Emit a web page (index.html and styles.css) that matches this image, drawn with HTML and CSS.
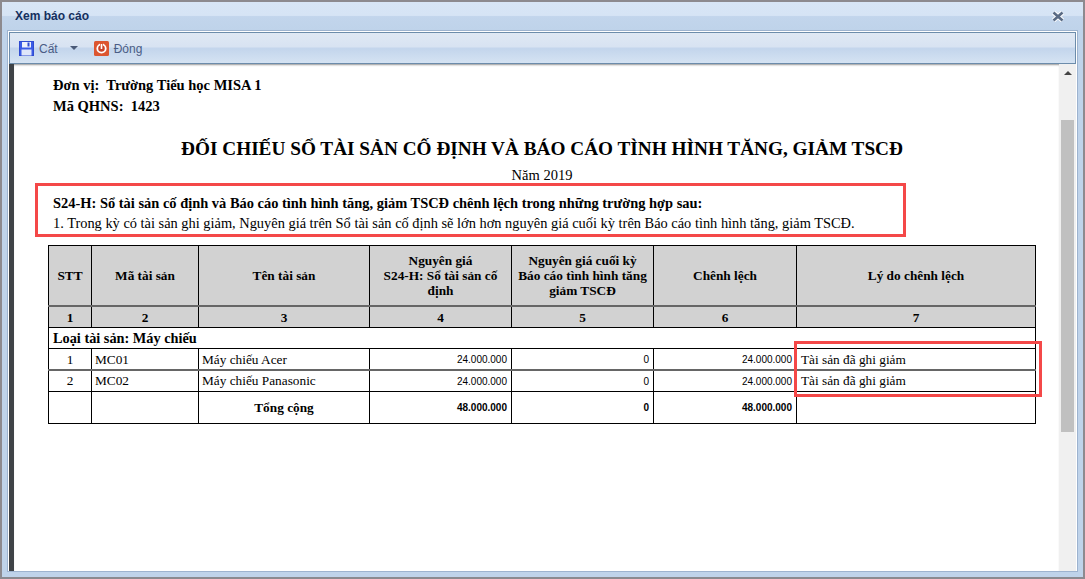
FILE: index.html
```html
<!DOCTYPE html>
<html lang="vi">
<head>
    <meta charset="UTF-8">
    <title>Xem báo cáo</title>
    <link rel="stylesheet" href="styles.css">
</head>
<body>
    <div class="window">
        <!-- Title bar -->
        <div class="titlebar">
            <div class="title">Xem báo cáo</div>
            <svg class="close" width="12" height="11" viewBox="0 0 12 11">
                <path d="M1.5 1.5 L10.5 9.5 M10.5 1.5 L1.5 9.5" stroke="#fff" stroke-width="4.5" fill="none"/>
                <path d="M1.5 1.5 L10.5 9.5 M10.5 1.5 L1.5 9.5" stroke="#5a6b85" stroke-width="2.6" fill="none"/>
            </svg>
        </div>

        <div class="frame">
            <!-- Toolbar -->
            <div class="toolbar">
                <div class="tool">
                    <svg width="15" height="15" viewBox="0 0 15 15">
                        <rect x="0.5" y="0.5" width="14" height="14" fill="#3a5be6" stroke="#2f4bd0"/>
                        <rect x="3" y="1" width="9" height="5.5" fill="#eef1fb"/>
                        <rect x="8.5" y="1.5" width="2" height="4" fill="#2f4bd0"/>
                        <rect x="2.5" y="8.5" width="10" height="6" fill="#dfe6fa"/>
                    </svg>
                    <span class="tool-label">Cất</span>
                    <span class="caret"></span>
                </div>
                <div class="tool">
                    <svg width="15" height="15" viewBox="0 0 15 15">
                        <rect x="0" y="0" width="15" height="15" rx="1.5" fill="#dc5530"/>
                        <circle cx="7.5" cy="7.5" r="4.2" fill="#c9432a" stroke="#fff" stroke-width="1.8"/>
                        <rect x="6" y="2" width="3" height="4" fill="#dc5530"/>
                        <rect x="6.7" y="3" width="1.6" height="5" fill="#fff"/>
                    </svg>
                    <span class="tool-label">Đóng</span>
                </div>
            </div>

            <div class="body">
                <div class="left-bar"></div>

                <!-- Report -->
                <div class="report">
                    <div class="unit">Đơn vị:&nbsp; Trường Tiểu học MISA 1</div>
                    <div class="unit">Mã QHNS:&nbsp; 1423</div>
                    <h1>ĐỐI CHIẾU SỔ TÀI SẢN CỐ ĐỊNH VÀ BÁO CÁO TÌNH HÌNH TĂNG, GIẢM TSCĐ</h1>
                    <div class="year">Năm 2019</div>
                    <div class="note">
                        <div class="note-title">S24-H: Sổ tài sản cố định và Báo cáo tình hình tăng, giảm TSCĐ chênh lệch trong những trường hợp sau:</div>
                        <div class="note-line">1. Trong kỳ có tài sản ghi giảm, Nguyên giá trên Sổ tài sản cố định sẽ lớn hơn nguyên giá cuối kỳ trên Báo cáo tình hình tăng, giảm TSCĐ.</div>
                    </div>

                    <table class="grid">
                        <colgroup>
                            <col class="c-stt"><col class="c-ma"><col class="c-ten"><col class="c-ng"><col class="c-ngck"><col class="c-cl"><col class="c-ld">
                        </colgroup>
                        <thead>
                            <tr class="head">
                                <th>STT</th>
                                <th>Mã tài sản</th>
                                <th>Tên tài sản</th>
                                <th>Nguyên giá<br>S24-H: Sổ tài sản cố<br>định</th>
                                <th>Nguyên giá cuối kỳ<br>Báo cáo tình hình tăng<br>giảm TSCĐ</th>
                                <th>Chênh lệch</th>
                                <th>Lý do chênh lệch</th>
                            </tr>
                            <tr class="nums">
                                <th>1</th><th>2</th><th>3</th><th>4</th><th>5</th><th>6</th><th>7</th>
                            </tr>
                        </thead>
                        <tbody>
                            <tr class="group">
                                <td colspan="7">Loại tài sản: Máy chiếu</td>
                            </tr>
                            <tr class="row row-first">
                                <td class="center">1</td>
                                <td>MC01</td>
                                <td>Máy chiếu Acer</td>
                                <td class="num">24.000.000</td>
                                <td class="num">0</td>
                                <td class="num">24.000.000</td>
                                <td class="reason">Tài sản đã ghi giảm</td>
                            </tr>
                            <tr class="row row-dotted">
                                <td class="center">2</td>
                                <td>MC02</td>
                                <td>Máy chiếu Panasonic</td>
                                <td class="num">24.000.000</td>
                                <td class="num">0</td>
                                <td class="num">24.000.000</td>
                                <td class="reason">Tài sản đã ghi giảm</td>
                            </tr>
                            <tr class="total">
                                <td></td>
                                <td></td>
                                <td class="center">Tổng cộng</td>
                                <td class="num">48.000.000</td>
                                <td class="num">0</td>
                                <td class="num">48.000.000</td>
                                <td></td>
                            </tr>
                        </tbody>
                    </table>
                </div>

                <!-- Scrollbar -->
                <div class="scrollbar">
                    <div class="arrow"></div>
                    <div class="thumb"></div>
                </div>

                <!-- Red highlight boxes drawn over the report -->
                <div class="mark mark-note"></div>
                <div class="mark mark-reason"></div>
            </div>
        </div>
    </div>
</body>
</html>
```

FILE: styles.css
```css
html, body {
    margin: 0;
    padding: 0;
    height: 100%;
    overflow: hidden;
}
body {
    font-family: "Liberation Serif", serif;
    color: #000;
}
.window {
    box-sizing: border-box;
    width: 1085px;
    height: 579px;
    display: flex;
    flex-direction: column;
    border: 2px solid #8d8a8f;
    border-bottom-color: #8a8a90;
    background-color: #bfd3ea;
    padding: 0 5px 5px 5px;
}
.titlebar {
    height: 28px;
    margin: 0 -5px;
    padding: 0 19px 0 13px;
    display: flex;
    align-items: center;
    justify-content: space-between;
    background: linear-gradient(to bottom, #d8e5f6 0, #d6e4f5 48%, #c2d5ec 52%, #bfd3ea 100%);
}
.title {
    font-family: "Liberation Sans", sans-serif;
    font-size: 12px;
    font-weight: bold;
    color: #15305f;
}
.frame {
    flex: 1;
    display: flex;
    flex-direction: column;
    min-height: 0;
    border: 1px solid #9db3cf;
    background-color: #fff;
    padding: 1px 1px 0 1px;
}
.toolbar {
    box-sizing: border-box;
    height: 32px;
    flex-shrink: 0;
    display: flex;
    align-items: center;
    gap: 16px;
    padding: 0 0 0 9px;
    border: 1px solid #6c8cab;
    background: linear-gradient(to bottom, #dfe8f4 0, #d8e3f2 45%, #c3d5ec 52%, #d5e3f3 100%);
}
.tool {
    display: flex;
    align-items: center;
    gap: 5px;
}
.tool-label {
    font-family: "Liberation Sans", sans-serif;
    font-size: 12px;
    color: #4a5c85;
    padding-top: 1px;
}
.caret {
    width: 0;
    height: 0;
    margin-left: 7px;
    border-left: 4px solid transparent;
    border-right: 4px solid transparent;
    border-top: 4px solid #4a5a78;
}
.body {
    flex: 1;
    min-height: 0;
    display: flex;
    position: relative;
}
.left-bar {
    width: 5px;
    background-color: #3f4347;
}
.report {
    flex: 1;
    min-width: 0;
    overflow: hidden;
    padding: 11px 0 0 34px;
    box-shadow: inset 0 2px 2px -1px #999;
}
.unit {
    font-size: 14.5px;
    font-weight: bold;
    line-height: 21px;
    margin-left: 5px;
}
h1 {
    margin: 20px 0 0 0;
    width: 988px;
    text-align: center;
    font-size: 19.25px;
    line-height: 24px;
    font-weight: bold;
}
.year {
    width: 988px;
    text-align: center;
    font-size: 14.5px;
    line-height: 16px;
    margin-top: 6px;
}
.note {
    margin: 10px 0 0 5px;
    font-size: 14.4px;
    line-height: 20px;
    height: 40px;
}
.note-title {
    font-size: 14.45px;
    font-weight: bold;
}
.grid {
    margin-top: 12px;
    table-layout: fixed;
    width: 987px;
    border-collapse: collapse;
    font-size: 13.3px;
}
.c-stt { width: 43px; }
.c-ma { width: 107px; }
.c-ten { width: 171px; }
.c-ng { width: 142px; }
.c-ngck { width: 142px; }
.c-cl { width: 143px; }
.c-ld { width: 239px; }
.grid th, .grid td {
    border: 1px solid #000;
    padding: 0 3px;
    overflow: hidden;
    white-space: nowrap;
}
.grid th {
    background-color: #d2d2d2;
    text-align: center;
    line-height: 15px;
}
.head th {
    height: 59px;
    border-bottom: 2px solid #666;
}
.nums th {
    height: 20px;
}
.grid .group td {
    height: 20px;
    padding-left: 4px;
    font-size: 14.3px;
    font-weight: bold;
}
.row td {
    height: 20px;
}
.row-first td {
    height: 19px;
    padding-top: 1px;
}
.row-dotted td {
    border-top: 2px solid #666;
}
.grid .reason {
    padding-left: 4px;
}
.total td {
    height: 31px;
    font-weight: bold;
}
.center {
    text-align: center;
}
.grid .num {
    text-align: right;
    padding-right: 4px;
    font-family: "Liberation Sans", sans-serif;
    font-size: 10px;
}
.scrollbar {
    width: 17px;
    background-color: #f0f0f0;
    position: relative;
    flex-shrink: 0;
}
.arrow {
    width: 0;
    height: 0;
    margin: 7px auto 0 auto;
    border-left: 4px solid transparent;
    border-right: 4px solid transparent;
    border-bottom: 4px solid #444;
}
.thumb {
    margin: 45px auto 0 auto;
    width: 13px;
    height: 312px;
    background-color: #c0c0c0;
}
.mark {
    position: absolute;
    box-sizing: border-box;
    border: 3px solid #f44848;
}
.mark-note {
    left: 26px;
    top: 119px;
    width: 871px;
    height: 54px;
}
.mark-reason {
    left: 785px;
    top: 277px;
    width: 248px;
    height: 56px;
}
```
